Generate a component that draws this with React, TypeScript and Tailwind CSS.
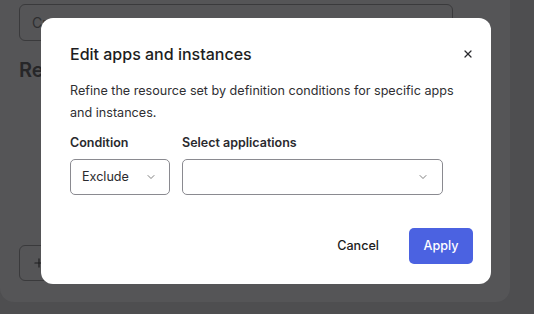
import { X, ChevronDown, Plus } from "lucide-react";

export default function App() {
  return (
    <div
      className="relative w-[534px] h-[314px] overflow-hidden bg-[#4e4e50]"
      style={{ fontFamily: "Inter, 'Noto Sans', sans-serif" }}
    >
      {/* Page behind the overlay */}
      <div className="w-[510px] h-[302px] rounded-b-[14px] bg-[#555557] pl-[19px] pt-[4px]">
        <div className="w-[434px] h-[37px] rounded-[6px] border border-[#3a3a3c] flex items-center pl-[12px] text-[14px] text-[#2e2e30]">
          Create a resource set
        </div>
        <h2 className="mt-[14px] text-[20px] font-semibold text-[#262628]">Resources</h2>
        <div className="mt-[160px] w-[120px] h-[36px] rounded-[6px] border border-[#3a3a3c] flex items-center pl-[12px] text-[#1e1e20]">
          <Plus size={14} strokeWidth={2} />
        </div>
      </div>

      {/* Modal */}
      <div className="absolute left-[41px] top-[18px] w-[450px] h-[266px] rounded-[12px] bg-white px-[29px] pt-[25px] text-[#1d1d21]">
        <div className="flex items-center justify-between">
          <h1 className="text-[16px] font-medium leading-[22px]">Edit apps and instances</h1>
          <X size={12} strokeWidth={2.5} className="mr-[-12px] text-[#2a2a2e]" />
        </div>
        <p className="mt-[15px] text-[12.6px] leading-[22px] text-[#2f2f33] w-[400px]">
          Refine the resource set by definition conditions for specific apps and instances.
        </p>
        <div className="mt-[10px] flex gap-[12px]">
          <div className="flex flex-col">
            <label className="text-[12.5px] font-semibold leading-[18px] text-[#2a2a2e]">Condition</label>
            <div className="mt-[7px] w-[100px] h-[36px] rounded-[5px] border border-[#8a8a90] flex items-center justify-between pl-[11px] pr-[12px] text-[12.6px] text-[#2a2a2e]">
              <span>Exclude</span>
              <ChevronDown size={12} strokeWidth={1.5} className="text-[#555]" />
            </div>
          </div>
          <div className="flex flex-col">
            <label className="text-[12.5px] font-semibold leading-[18px] text-[#2a2a2e]">Select applications</label>
            <div className="mt-[7px] w-[261px] h-[36px] rounded-[5px] border border-[#8a8a90] flex items-center justify-end pr-[13px]">
              <ChevronDown size={12} strokeWidth={1.5} className="text-[#555]" />
            </div>
          </div>
        </div>
        <div className="mt-[33px] flex justify-end items-center gap-[22px] mr-[-11px]">
          <button className="text-[12.6px] font-medium text-[#1d1d21] px-[8px] h-[36px]">Cancel</button>
          <button className="h-[36px] w-[64px] rounded-[5px] bg-[#4b62e1] text-white text-[12.6px] font-medium">
            Apply
          </button>
        </div>
      </div>
    </div>
  );
}
